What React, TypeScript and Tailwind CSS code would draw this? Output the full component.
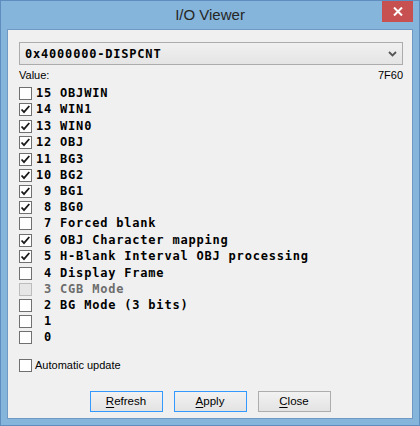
import React from "react";

const rows: { n: string; label: string; checked: boolean; disabled?: boolean; h: string }[] = [
  { n: "15", label: "OBJWIN", checked: false, h: "h-[16px]" },
  { n: "14", label: "WIN1", checked: true, h: "h-[17px]" },
  { n: "13", label: "WIN0", checked: true, h: "h-[16px]" },
  { n: "12", label: "OBJ", checked: true, h: "h-[17px]" },
  { n: "11", label: "BG3", checked: true, h: "h-[16px]" },
  { n: "10", label: "BG2", checked: true, h: "h-[16px]" },
  { n: " 9", label: "BG1", checked: true, h: "h-[16px]" },
  { n: " 8", label: "BG0", checked: true, h: "h-[16px]" },
  { n: " 7", label: "Forced blank", checked: false, h: "h-[17px]" },
  { n: " 6", label: "OBJ Character mapping", checked: true, h: "h-[16px]" },
  { n: " 5", label: "H-Blank Interval OBJ processing", checked: true, h: "h-[17px]" },
  { n: " 4", label: "Display Frame", checked: false, h: "h-[16px]" },
  { n: " 3", label: "CGB Mode", checked: false, disabled: true, h: "h-[16px]" },
  { n: " 2", label: "BG Mode (3 bits)", checked: false, h: "h-[16px]" },
  { n: " 1", label: "", checked: false, h: "h-[16px]" },
  { n: " 0", label: "", checked: false, h: "h-[16px]" },
];

function Box({ checked, disabled }: { checked: boolean; disabled?: boolean }) {
  return (
    <div
      className={
        "w-[13px] h-[13px] shrink-0 border " +
        (disabled ? "border-[#bcbcbc] bg-[#e6e6e6]" : "border-[#707070] bg-white")
      }
    >
      {checked && (
        <svg width="11" height="11" viewBox="0 0 11 11" className="block">
          <path d="M1.5 5.5 L4 8.2 L9.3 2" fill="none" stroke="#1a1a1a" strokeWidth="1.8" />
        </svg>
      )}
    </div>
  );
}

const mono = { fontFamily: '"DejaVu Sans Mono", "Liberation Mono", monospace' };
const sans = { fontFamily: '"Liberation Sans", Arial, sans-serif' };

function Btn({ first, rest, focused }: { first: string; rest: string; focused?: boolean }) {
  return (
    <div
      className={
        "w-[73px] h-[21px] flex items-center justify-center text-[11.5px] text-black bg-gradient-to-b from-[#f2f2f2] to-[#e3e3e3] border " +
        (focused ? "border-[#3399ff]" : "border-[#adadad]")
      }
      style={sans}
    >
      <span>
        <span className="underline underline-offset-[2px]">{first}</span>
        {rest}
      </span>
    </div>
  );
}

export default function App() {
  return (
    <div className="w-[420px] h-[426px] bg-[#85b5da] border border-[#5f8dbf] flex flex-col relative">
      <div className="h-[28px] flex items-center justify-center text-[15px] text-[#262626]" style={sans}>
        I/O Viewer
      </div>
      <div className="absolute right-[6px] top-0 w-[31px] h-[21px] bg-[#c75050] flex items-center justify-center">
        <svg width="10" height="9" viewBox="0 0 10 9">
          <path d="M1 0.5 L9 8.5 M9 0.5 L1 8.5" stroke="white" strokeWidth="2" />
        </svg>
      </div>
      <div className="mx-[6px] mb-[6px] flex-1 border border-[#6f98c4] bg-[#f0f0f0] flex flex-col pl-[11px] pr-[9px] pt-[12px]">
        <div className="h-[23px] border border-[#acacac] bg-gradient-to-b from-[#f0f0f0] to-[#e5e5e5] flex items-center pl-[5px] pr-[5px]">
          <span className="flex-1 text-[12px] font-bold tracking-[0.8px] text-black" style={mono}>
            0x4000000-DISPCNT
          </span>
          <svg width="9" height="6" viewBox="0 0 9 6">
            <path d="M1 1 L4.5 4.5 L8 1" fill="none" stroke="#555" strokeWidth="1.8" />
          </svg>
        </div>
        <div className="mt-[2px] h-[16px] flex items-center justify-between text-[11px] text-black" style={sans}>
          <span>Value:</span>
          <span>7F60</span>
        </div>
        <div className="mt-[2px] flex flex-col">
          {rows.map((r) => (
            <div key={r.n} className={r.h + " flex items-start"}>
              <div className="mt-[2px]">
                <Box checked={r.checked} disabled={r.disabled} />
              </div>
              <span
                className={
                  "ml-[4px] leading-[16px] text-[12px] font-bold tracking-[0.8px] whitespace-pre " +
                  (r.disabled ? "text-[#6d6d6d]" : "text-black")
                }
                style={mono}
              >
                {r.n + " " + r.label}
              </span>
            </div>
          ))}
        </div>
        <div className="mt-[12px] h-[16px] flex items-start">
          <div className="mt-[2px]">
            <Box checked={false} />
          </div>
          <span className="ml-[3px] leading-[16px] text-[11px] text-black" style={sans}>
            Automatic update
          </span>
        </div>
        <div className="mt-[18px] flex justify-center gap-[11px] pr-[2px]">
          <Btn first="R" rest="efresh" focused />
          <Btn first="A" rest="pply" focused />
          <Btn first="C" rest="lose" />
        </div>
      </div>
    </div>
  );
}
